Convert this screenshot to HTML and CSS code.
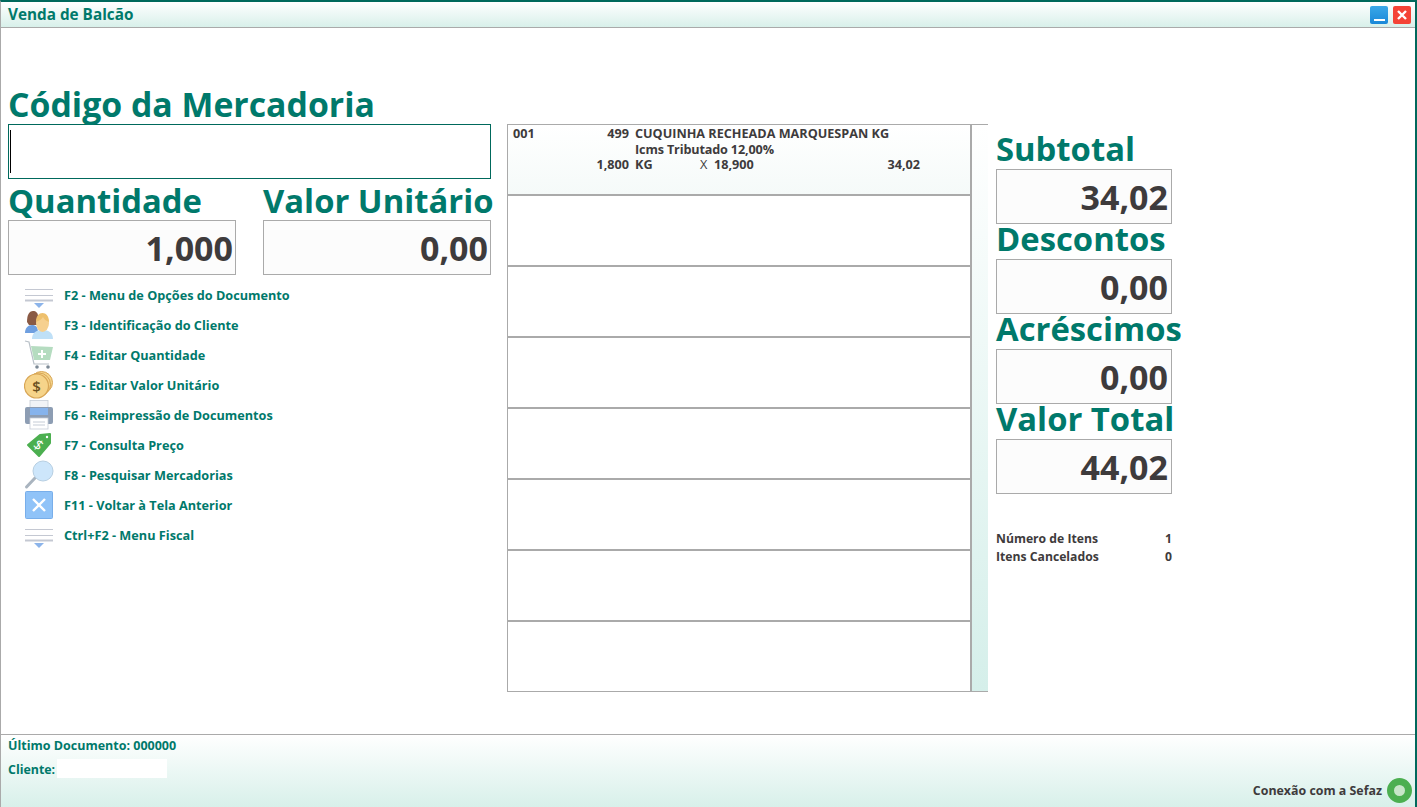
FILE: index.html
```html
<!DOCTYPE html>
<html lang="pt-BR">
<head>
	<meta charset="UTF-8">
	<title>Venda de Balcão</title>
	<link rel="stylesheet" href="styles.css">
</head>
<body>
	<div id="window">
		<div id="titlebar">
			<span class="title">Venda de Balcão</span>
			<span class="winbtns">
				<span class="winbtn minimize"><svg width="18" height="18" viewBox="0 0 18 18"><rect x="4" y="13" width="11" height="2" fill="#fff"/></svg></span>
				<span class="winbtn close"><svg width="18" height="18" viewBox="0 0 18 18"><path d="M5 5l8 8M13 5l-8 8" stroke="#fff" stroke-width="2.4"/></svg></span>
			</span>
		</div>

		<div id="main">
			<div id="left">
				<h1 class="big">Código da Mercadoria</h1>
				<div class="codebox"><span class="caret"></span></div>
				<div class="pair">
					<div class="field">
						<div class="big">Quantidade</div>
						<div class="valuebox">1,000</div>
					</div>
					<div class="field">
						<div class="big">Valor Unitário</div>
						<div class="valuebox">0,00</div>
					</div>
				</div>
				<ul class="shortcuts">
					<li>
						<svg class="ico" viewBox="0 0 30 30"><path d="M1 9.500h28M1 15.500h28" stroke="#c4c8d2" stroke-width="1"/><path d="M1 20.500h28" stroke="#c4c8d2" stroke-width="2"/><path d="M10 23h10l-5 5z" fill="#8cb4ea"/></svg>
						F2 - Menu de Opções do Documento
					</li>
					<li>
						<svg class="ico" viewBox="0 0 30 30"><path d="M1 23c0-5 3-8 7-8s6 2 6 8z" fill="#6f9fe0"/><path d="M3 12C3 5 5 1 9 1c3 0 5 2 5 5l-1 9H5z" fill="#8a5a44"/><path d="M8 29c0-6 4-9 10.500-9S29 23 29 29z" fill="#bfe0f7"/><ellipse cx="18.500" cy="13" rx="6.500" ry="9" fill="#f6d08f"/><path d="M12 12c0-6 3-9 6.500-9S25 6 25 12c-3-1-5-3-6-5-1 2-4 4-7 5z" fill="#eec06d"/></svg>
						F3 - Identificação do Cliente
					</li>
					<li>
						<svg class="ico" viewBox="0 0 30 30"><path d="M1 1l4 1 5 22h15" fill="none" stroke="#b9c1c8" stroke-width="1.200"/><path d="M7 6l22 1-3 13H10z" fill="#b5dcc0"/><path d="M18 10v8M14 14h8" stroke="#fff" stroke-width="2"/><circle cx="13" cy="27" r="1.800" fill="#7d8a96"/><circle cx="24" cy="27" r="1.800" fill="#7d8a96"/></svg>
						F4 - Editar Quantidade
					</li>
					<li>
						<svg class="ico" viewBox="0 0 30 30"><circle cx="17.500" cy="12.500" r="11" fill="#f5d58c" stroke="#d8a656"/><circle cx="15" cy="14.500" r="11.500" fill="#f5d58c" stroke="#d8a656"/><circle cx="12.500" cy="16" r="12" fill="#f6d48a" stroke="#d8a656" stroke-width="1.200"/><text x="12.500" y="21.500" class="dollar">$</text></svg>
						F5 - Editar Valor Unitário
					</li>
					<li>
						<svg class="ico" viewBox="0 0 30 30"><rect x="6" y="0.500" width="18" height="9" fill="#f1f3f6" stroke="#c5ccd6" stroke-width=".8"/><rect x="1" y="7" width="28" height="17" rx="2" fill="#8d9db3"/><rect x="6" y="8" width="18" height="7" fill="#86b3ec"/><rect x="6" y="18" width="18" height="11" fill="#fff" stroke="#c5ccd6" stroke-width=".8"/><path d="M9 22h12M9 25h12" stroke="#c5ccd6"/></svg>
						F6 - Reimpressão de Documentos
					</li>
					<li>
						<svg class="ico" viewBox="0 0 30 30"><path d="M4 15L16 5l10-1 0 9-11 13z" fill="#4caf50" stroke="#4caf50" stroke-width="2" stroke-linejoin="round"/><circle cx="23" cy="7" r="1.200" fill="#fff"/><text x="14.500" y="20" class="tag" transform="rotate(40 14.500 15)">$</text></svg>
						F7 - Consulta Preço
					</li>
					<li>
						<svg class="ico" viewBox="0 0 30 30"><path d="M2.500 27L11 18" stroke="#a9b4bf" stroke-width="3" stroke-linecap="round"/><circle cx="19" cy="11" r="10" fill="#cde6fb" stroke="#b7cfe2"/></svg>
						F8 - Pesquisar Mercadorias
					</li>
					<li>
						<svg class="ico" viewBox="0 0 30 30"><rect x="1.500" y="1.500" width="27" height="27" rx="1" fill="#90c3f8" stroke="#78aeea"/><path d="M9 9l12 12M21 9L9 21" stroke="#fff" stroke-width="2.400"/></svg>
						F11 - Voltar à Tela Anterior
					</li>
					<li>
						<svg class="ico" viewBox="0 0 30 30"><path d="M1 9.500h28M1 15.500h28" stroke="#c4c8d2" stroke-width="1"/><path d="M1 20.500h28" stroke="#c4c8d2" stroke-width="2"/><path d="M10 23h10l-5 5z" fill="#8cb4ea"/></svg>
						Ctrl+F2 - Menu Fiscal
					</li>
				</ul>
			</div>

			<div id="grid">
				<div class="rows">
					<div class="row filled">
						<div class="line">
							<span class="c-seq">001</span>
							<span class="c-num">499</span>
							<span>CUQUINHA RECHEADA MARQUESPAN KG</span>
						</div>
						<div class="line">
							<span class="c-seq"></span>
							<span class="c-num"></span>
							<span class="c-tax">Icms Tributado 12,00%</span>
						</div>
						<div class="line">
							<span class="c-seq"></span>
							<span class="c-num">1,800</span>
							<span class="c-un">KG</span>
							<span class="c-x">X</span>
							<span class="c-unit">18,900</span>
							<span class="c-total">34,02</span>
						</div>
					</div>
					<div class="row"></div>
					<div class="row"></div>
					<div class="row"></div>
					<div class="row"></div>
					<div class="row"></div>
					<div class="row"></div>
					<div class="row"></div>
				</div>
				<div class="scroll"></div>
			</div>

			<div id="right">
				<div class="big">Subtotal</div>
				<div class="valuebox">34,02</div>
				<div class="big">Descontos</div>
				<div class="valuebox">0,00</div>
				<div class="big">Acréscimos</div>
				<div class="valuebox">0,00</div>
				<div class="big">Valor Total</div>
				<div class="valuebox">44,02</div>
				<div class="counts">
					<div class="count"><span>Número de Itens</span><span>1</span></div>
					<div class="count"><span>Itens Cancelados</span><span>0</span></div>
				</div>
			</div>
		</div>

		<div id="footer">
			<div class="ultimo">Último Documento: 000000</div>
			<div class="cliente"><span class="clientelabel">Cliente:</span><span class="clientebox"></span></div>
			<div class="sefaz">Conexão com a Sefaz <span class="led"></span></div>
		</div>
	</div>
</body>
</html>
```

FILE: styles.css
```css
html, body {
	margin: 0;
	padding: 0;
	height: 100%;
	overflow: hidden;
}
body {
	font-family: "Open Sans", "Noto Sans", sans-serif;
	font-weight: 700;
	font-size: 12.400px;
	color: #00796b;
	background: #fff;
}
#window {
	height: 807px;
	display: flex;
	flex-direction: column;
	box-sizing: border-box;
	border-top: 2px solid #00695c;
	border-right: 2px solid #00695c;
	border-left: 1px solid #aaa;
}
#titlebar {
	height: 25px;
	flex: none;
	display: flex;
	align-items: center;
	justify-content: space-between;
	padding: 0 4px 0 7px;
	background: linear-gradient(#fff, #d8f0ea);
	border-bottom: 1px solid #aaa;
}
.title {
	font-size: 15.300px;
	line-height: 22px;
	margin-bottom: 2px;
}
.winbtns {
	display: flex;
	gap: 5px;
}
.winbtn {
	width: 18px;
	height: 18px;
	border-radius: 2px;
	display: block;
}
.winbtn svg {
	display: block;
}
.minimize {
	background: linear-gradient(#3aa8e8, #1a88d8);
}
.close {
	background: #f44336;
}
#main {
	flex: 1;
	display: flex;
	align-items: flex-start;
	padding: 59px 0 0 7px;
}
#left {
	width: 483px;
	flex: none;
}
.big {
	font-size: 32.800px;
	line-height: 35px;
	padding-bottom: 2px;
	font-weight: 700;
	margin: 0;
	white-space: nowrap;
}
h1.big {
	font-size: 33.800px;
}
.codebox {
	height: 53px;
	border: 1px solid #00695c;
	display: flex;
	align-items: center;
	padding-left: 1px;
	margin-bottom: 4px;
}
.caret {
	width: 1px;
	height: 43px;
	background: #000;
}
.pair {
	display: flex;
	justify-content: space-between;
}
.field {
	width: 228px;
}
.valuebox {
	height: 53px;
	border: 1px solid #aaa;
	background: #fcfcfc;
	color: #3e3b3c;
	font-size: 34px;
	line-height: 55px;
	text-align: right;
	padding-right: 2px;
}
.shortcuts {
	list-style: none;
	margin: 5px 0 0;
	padding: 0 0 0 16px;
	font-size: 12.700px;
}
.shortcuts li {
	height: 30px;
	display: flex;
	align-items: center;
	gap: 10px;
}
.ico {
	width: 30px;
	height: 30px;
	flex: none;
}
.dollar {
	font-size: 15px;
	font-weight: 600;
	fill: #6b5020;
	text-anchor: middle;
}
.tag {
	font-size: 14px;
	font-weight: 400;
	fill: #fff;
	text-anchor: middle;
}
#grid {
	margin-left: 16px;
	margin-top: 37px;
	height: 568px;
	width: 481px;
	flex: none;
	display: flex;
	box-sizing: border-box;
	border: 1px solid #aaa;
	border-right: 0;
}
.rows {
	width: 463px;
	display: flex;
	flex-direction: column;
}
.row {
	flex: 1;
	border-bottom: 2px solid #aaa;
	color: #3e3b3c;
	padding: 1px 0 0 5px;
	box-sizing: border-box;
}
.row:last-child {
	border-bottom: 0;
}
.row.filled {
	background: linear-gradient(#fff, #f5faf9);
	font-size: 12.650px;
}
.line {
	display: flex;
	line-height: 15.500px;
	white-space: nowrap;
}
.c-seq {
	width: 60px;
}
.c-num {
	width: 56px;
	text-align: right;
	margin-right: 6px;
}
.c-tax {
	letter-spacing: -0.150px;
}
.c-un {
	width: 65px;
}
.c-x {
	width: 14px;
	font-weight: 400;
}
.c-unit {
	width: 140px;
}
.c-total {
	width: 66px;
	text-align: right;
}
.scroll {
	width: 16px;
	border-left: 2px solid #aaa;
	background: linear-gradient(#fff, #d5efea);
}
#right {
	margin-left: 8px;
	margin-top: 47px;
	width: 176px;
	flex: none;
}
#right .big {
	line-height: 30px;
	padding-bottom: 5px;
}
#right .valuebox {
	padding-right: 3px;
}
.counts {
	margin-top: 36px;
	color: #3e3b3c;
	font-size: 12.200px;
}
.count {
	display: flex;
	justify-content: space-between;
	line-height: 18px;
}
#footer {
	height: 73px;
	flex: none;
	position: relative;
	box-sizing: border-box;
	border-top: 1px solid #aaa;
	padding: 2px 0 0 7px;
	background: linear-gradient(#fff, #d8f0ea);
}
.ultimo {
	line-height: 18px;
	font-size: 12.500px;
}
.cliente {
	display: flex;
	align-items: flex-start;
	gap: 2px;
	margin-top: 4px;
	height: 19px;
}
.clientelabel {
	line-height: 22px;
}
.clientebox {
	width: 110px;
	height: 19px;
	background: #fff;
}
.sefaz {
	position: absolute;
	right: 3px;
	bottom: 4px;
	display: flex;
	align-items: center;
	gap: 5px;
	color: #3e3b3c;
}
.led {
	width: 11px;
	height: 11px;
	border: 7px solid #4caf50;
	border-radius: 50%;
	background: #c8e6c9;
}
```
